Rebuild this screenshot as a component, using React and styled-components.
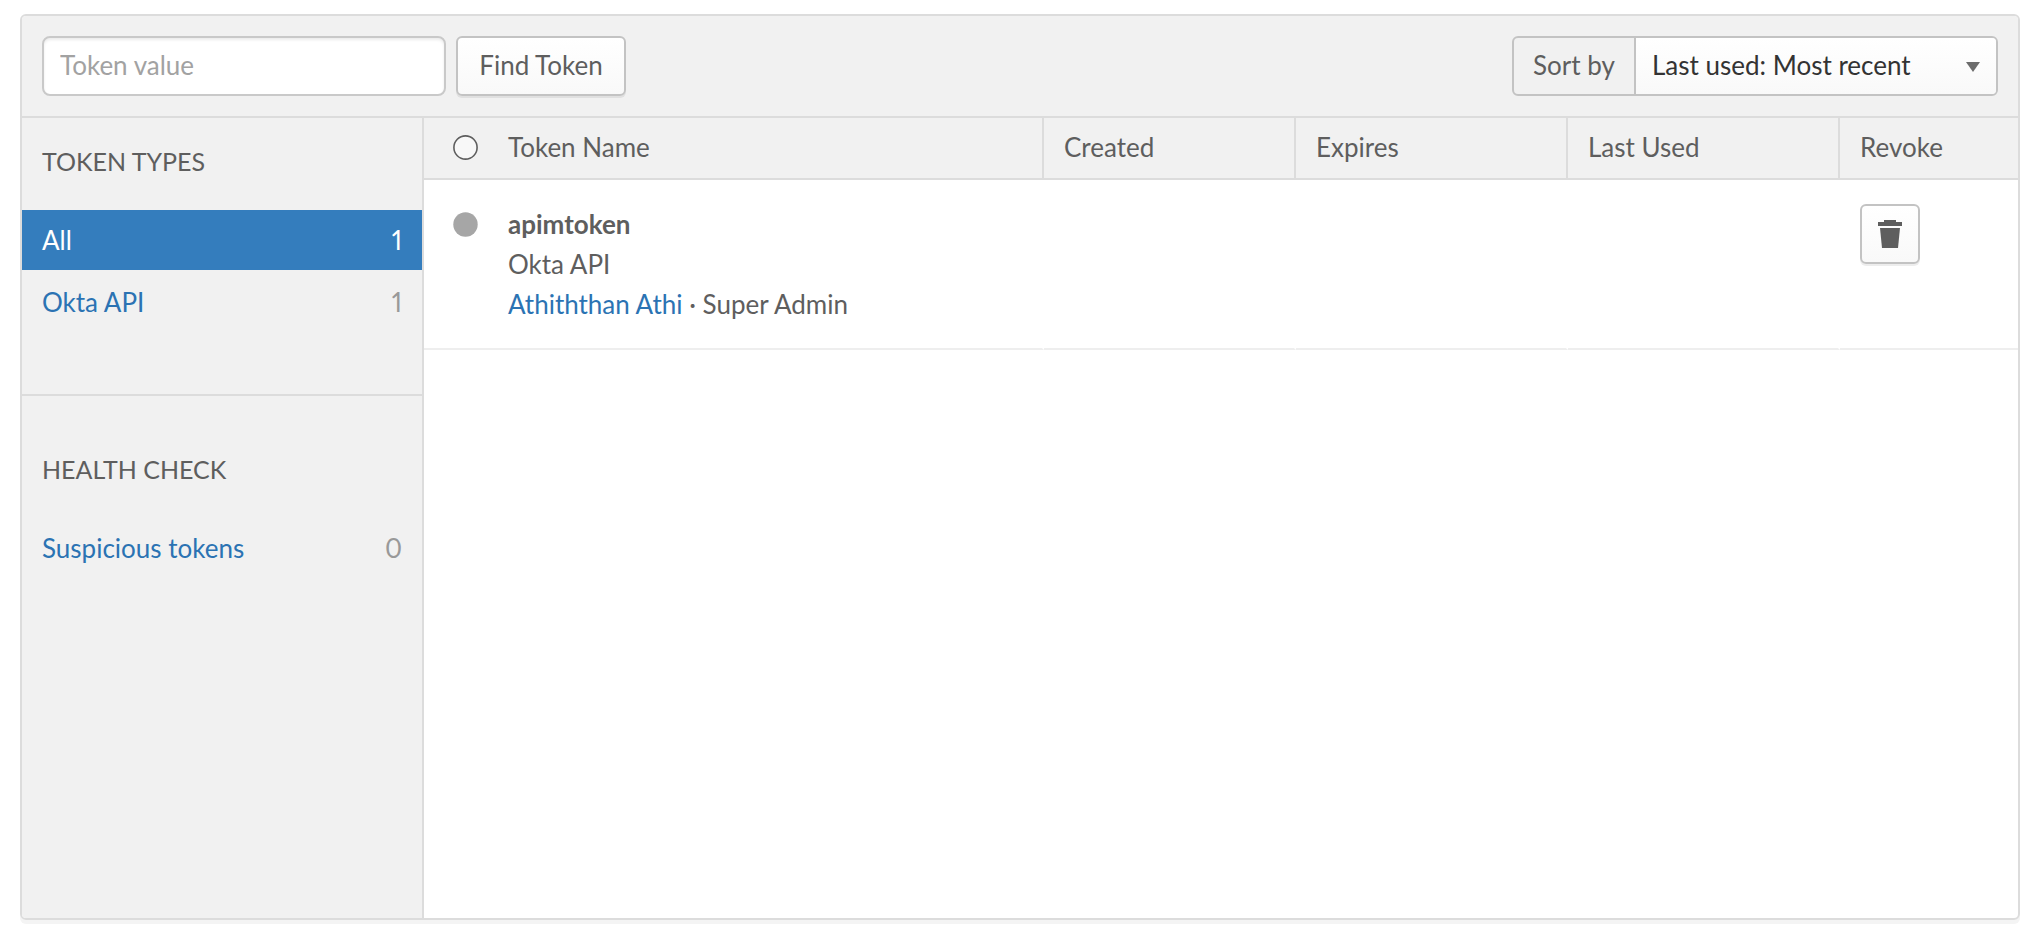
import React from "react";
import styled, { createGlobalStyle, css } from "styled-components";

const GlobalStyle = createGlobalStyle`
  *, *::before, *::after { box-sizing: border-box; }
  body {
    margin: 0;
    background: #fff;
    color: #5e5e5e;
    font-family: Lato, "Open Sans", sans-serif;
    font-size: 26px;
    line-height: 40px;
    font-variant-numeric: proportional-nums;
  }
  input, button, select { font: inherit; color: inherit; }
  a { color: #2b73b3; text-decoration: none; }
`;

const line = "#dcdcdc";
const controlLine = "#c3c3c3";

const Page = styled.main`
  display: flex;
  flex-direction: column;
  min-height: 100vh;
  padding: 14px 20px 20px;
`;

const Panel = styled.section`
  flex: 1;
  display: flex;
  flex-direction: column;
  border: 2px solid ${line};
  border-radius: 6px;
  box-shadow: 0 4px 0 #f4f4f4;
  overflow: hidden;
`;

const Toolbar = styled.div`
  display: flex;
  align-items: center;
  justify-content: space-between;
  padding: 20px;
  background: #f1f1f1;
  border-bottom: 2px solid ${line};
`;

const SearchForm = styled.form`
  display: flex;
  gap: 10px;
`;

const TextInput = styled.input`
  width: 404px;
  height: 60px;
  padding: 0 16px 2px;
  border: 2px solid #c9c9c9;
  border-radius: 8px;
  background: #fff;
  box-shadow: inset 0 2px 3px #ececec;
  &::placeholder { color: #a2a2a2; opacity: 1; }
`;

const raised = css`
  border: 2px solid ${controlLine};
  border-radius: 6px;
  background: linear-gradient(#fff, #f9f9f9);
  box-shadow: 0 2px 0 rgba(0, 0, 0, 0.07);
  cursor: pointer;
`;

const Button = styled.button`
  ${raised}
  width: 170px;
  height: 60px;
  padding: 0 0 2px;
`;

const IconButton = styled.button`
  ${raised}
  display: flex;
  align-items: center;
  justify-content: center;
  width: 60px;
  height: 60px;
  padding: 0;
`;

const SortGroup = styled.div`
  display: flex;
  height: 60px;
  border: 2px solid ${controlLine};
  border-radius: 6px;
  overflow: hidden;
`;

const SortLabel = styled.label`
  display: flex;
  align-items: center;
  justify-content: center;
  width: 120px;
  padding-bottom: 2px;
`;

const SelectWrap = styled.div`
  position: relative;
  display: flex;
  width: 362px;
  border-left: 2px solid ${controlLine};
`;

const Select = styled.select`
  appearance: none;
  flex: 1;
  padding: 0 44px 2px 16px;
  border: 0;
  border-radius: 0;
  background: linear-gradient(#fff, #f9f9f9);
  color: #333;
`;

const Caret = styled.svg`
  position: absolute;
  right: 16px;
  top: 24px;
  pointer-events: none;
`;

const Content = styled.div`
  flex: 1;
  display: flex;
`;

const Sidebar = styled.nav`
  flex: 0 0 402px;
  background: #f1f1f1;
  border-right: 2px solid ${line};
`;

const Group = styled.section`
  padding-bottom: 62px;
  & + & {
    padding-top: 30px;
    border-top: 2px solid ${line};
  }
`;

const GroupTitle = styled.h2`
  margin: 0;
  padding: 23px 20px 29px;
  font-size: 25px;
  font-weight: 400;
  text-transform: uppercase;
`;

const List = styled.ul`
  display: flex;
  flex-direction: column;
  gap: 2px;
  margin: 0;
  padding: 0;
  list-style: none;
`;

const FilterLink = styled.a`
  display: flex;
  justify-content: space-between;
  padding: 10px 20px;
  ${(p) => p.$active && css`
    background: #347dbd;
    color: #fff;
  `}
`;

const Count = styled.span`
  color: ${(p) => (p.$active ? "#fff" : "#999")};
`;

const TableArea = styled.div`
  flex: 1;
  min-width: 0;
`;

const Table = styled.table`
  width: 100%;
  table-layout: fixed;
  border-collapse: separate;
  border-spacing: 0;
`;

const Th = styled.th`
  width: ${(p) => p.$width || "auto"};
  height: 62px;
  padding: 0 20px 2px;
  background: #f1f1f1;
  border-bottom: 2px solid ${line};
  border-right: 2px solid ${line};
  font-weight: 400;
  text-align: left;
  &:last-child { border-right: 0; }
`;

const Td = styled.td`
  height: 170px;
  padding: 24px 20px;
  border-bottom: 2px solid #eee;
  border-right: 2px solid #fff;
  vertical-align: top;
  &:last-child { border-right: 0; }
`;

const NameCell = styled.div`
  display: flex;
  gap: 30px;
  padding-left: 9px;
`;

const StatusIcon = styled.svg`
  flex: none;
  margin-top: 8px;
`;

const TokenInfo = styled.div`
  display: flex;
  flex-direction: column;
`;

const TokenName = styled.strong`
  font-weight: 700;
`;

const groups = [
  { title: "Token types", items: [{ label: "All", count: 1, active: true }, { label: "Okta API", count: 1 }] },
  { title: "Health check", items: [{ label: "Suspicious tokens", count: 0 }] },
];

const Status = ({ filled }) => (
  <StatusIcon width="25" height="25" viewBox="0 0 25 25" aria-hidden="true">
    {filled ? (
      <circle cx="12.5" cy="12.5" r="12.2" fill="#a6a6a6" />
    ) : (
      <circle cx="12.5" cy="12.5" r="11.6" fill="#f8f8f8" stroke="#5e5e5e" strokeWidth="1.6" />
    )}
  </StatusIcon>
);

const TrashIcon = () => (
  <svg width="24" height="28" viewBox="0 0 24 28" fill="#5e5e5e" aria-hidden="true">
    <path d="M6 0h12v2h6v4H0V2h6z" />
    <path d="M2 8h20l-2 20H4z" />
  </svg>
);

export default function App() {
  return (
    <>
      <GlobalStyle />
      <Page>
        <Panel>
          <Toolbar>
            <SearchForm onSubmit={(e) => e.preventDefault()}>
              <TextInput type="text" placeholder="Token value" aria-label="Token value" />
              <Button type="submit">Find Token</Button>
            </SearchForm>
            <SortGroup>
              <SortLabel htmlFor="sort">Sort by</SortLabel>
              <SelectWrap>
                <Select id="sort" defaultValue="recent">
                  <option value="recent">Last used: Most recent</option>
                </Select>
                <Caret width="14" height="10" viewBox="0 0 14 10" aria-hidden="true">
                  <path d="M0 0h14L7 10z" fill="#6c6c6c" />
                </Caret>
              </SelectWrap>
            </SortGroup>
          </Toolbar>
          <Content>
            <Sidebar aria-label="Token filters">
              {groups.map((group) => (
                <Group key={group.title}>
                  <GroupTitle>{group.title}</GroupTitle>
                  <List>
                    {group.items.map((item) => (
                      <li key={item.label}>
                        <FilterLink href="#" $active={item.active}>
                          <span>{item.label}</span>
                          <Count $active={item.active}>{item.count}</Count>
                        </FilterLink>
                      </li>
                    ))}
                  </List>
                </Group>
              ))}
            </Sidebar>
            <TableArea>
              <Table>
                <thead>
                  <tr>
                    <Th scope="col">
                      <NameCell>
                        <Status />
                        Token Name
                      </NameCell>
                    </Th>
                    <Th scope="col" $width="252px">Created</Th>
                    <Th scope="col" $width="272px">Expires</Th>
                    <Th scope="col" $width="272px">Last Used</Th>
                    <Th scope="col" $width="178px">Revoke</Th>
                  </tr>
                </thead>
                <tbody>
                  <tr>
                    <Td>
                      <NameCell>
                        <Status filled />
                        <TokenInfo>
                          <TokenName>apimtoken</TokenName>
                          <span>Okta API</span>
                          <span><a href="#">Athiththan Athi</a> · Super Admin</span>
                        </TokenInfo>
                      </NameCell>
                    </Td>
                    <Td />
                    <Td />
                    <Td />
                    <Td>
                      <IconButton type="button" aria-label="Revoke token">
                        <TrashIcon />
                      </IconButton>
                    </Td>
                  </tr>
                </tbody>
              </Table>
            </TableArea>
          </Content>
        </Panel>
      </Page>
    </>
  );
}
